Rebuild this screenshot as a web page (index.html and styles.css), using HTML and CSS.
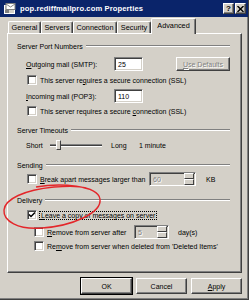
FILE: index.html
```html
<!DOCTYPE html>
<html lang="en">
<head>
<meta charset="UTF-8">
<title>pop.rediffmailpro.com Properties</title>
<link rel="stylesheet" href="styles.css">
</head>
<body>
  <div class="window">
    <div class="titlebar">
      <svg class="app-icon" width="12" height="11" viewBox="0 0 12 11">
        <rect x="0.5" y="2.5" width="10" height="8" fill="#d4d0c8" stroke="#fff"/>
        <rect x="2" y="0.5" width="9" height="6" fill="#fff" stroke="#808080"/>
        <path d="M2 1 L6.5 4 L11 1" stroke="#808080" fill="none"/>
        <rect x="1" y="7" width="4" height="3" fill="#808080"/>
      </svg>
      <span class="title">pop.rediffmailpro.com Properties</span>
      <div class="caption-btns">
        <div class="cap-btn">?</div>
        <div class="cap-btn">
          <svg width="7" height="6" viewBox="0 0 7 6"><path d="M0.5 0 L6.5 6 M6.5 0 L0.5 6" stroke="#000" stroke-width="1.4"/></svg>
        </div>
      </div>
    </div>

    <div class="tabs">
      <div class="tab w-general">General</div>
      <div class="tab w-servers">Servers</div>
      <div class="tab w-conn">Connection</div>
      <div class="tab w-sec">Security</div>
      <div class="tab tab-active w-adv">Advanced</div>
    </div>

    <div class="panel">
      <div class="legend">Server Port Numbers</div>
      <div class="field mt6">
        <span class="field-label"><u>O</u>utgoing mail (SMTP):</span>
        <div class="textbox">25</div>
        <div class="btn btn-disabled defaults"><u>U</u>se Defaults</div>
      </div>
      <div class="check-row mt3">
        <span class="check"></span>
        <span>This server re<u>q</u>uires a secure connection (SSL)</span>
      </div>
      <div class="field mt3">
        <span class="field-label"><u>I</u>ncoming mail (POP3):</span>
        <div class="textbox">110</div>
      </div>
      <div class="check-row mt2">
        <span class="check"></span>
        <span>This server requires a secure <u>c</u>onnection (SSL)</span>
      </div>

      <div class="legend mt8">Server Timeouts</div>
      <div class="slider-row mt4">
        <span class="short">Short</span>
        <div class="slider">
          <div class="track"></div>
          <div class="thumb"></div>
        </div>
        <span class="long">Long</span>
        <span>1 minute</span>
      </div>

      <div class="legend mt9">Sending</div>
      <div class="check-row tall mt2">
        <span class="check"></span>
        <span class="lbl-break"><u>B</u>reak apart messages larger than</span>
        <div class="spin spin-kb">
          <span class="spin-value">60</span>
          <div class="spin-btns"><span></span><span></span></div>
        </div>
        <span class="unit-kb">KB</span>
      </div>

      <div class="legend mt9">Delivery</div>
      <div class="check-row mt4">
        <span class="check">
          <svg width="8" height="8" viewBox="0 0 8 8"><path d="M1 3.5 L3 5.5 L7 1.5" stroke="#000" stroke-width="1.5" fill="none"/></svg>
        </span>
        <span class="focus"><u>L</u>eave a copy of messages on server</span>
      </div>
      <div class="check-row tall sub mt4">
        <span class="check"></span>
        <span class="lbl-remove"><u>R</u>emove from server after</span>
        <div class="spin spin-days">
          <span class="spin-value">5</span>
          <div class="spin-btns"><span></span><span></span></div>
        </div>
        <span class="unit-days">day(s)</span>
      </div>
      <div class="check-row sub mt1">
        <span class="check"></span>
        <span>Re<u>m</u>ove from server when deleted from 'Deleted Items'</span>
      </div>
    </div>

    <div class="buttons">
      <div class="btn btn-default">OK</div>
      <div class="btn">Cancel</div>
      <div class="btn"><u>A</u>pply</div>
    </div>

    <svg class="circle-mark" width="110" height="50" viewBox="0 182 110 50">
      <path d="M36 187 C60 183, 98 185, 100 199 C102 213, 72 226, 42 228 C18 230, 3 221, 4 210 C5 199, 24 190, 54 187 C68 186, 80 186, 86 188" fill="none" stroke="#e4262a" stroke-width="1.4"/>
    </svg>
  </div>
</body>
</html>
```

FILE: styles.css
```css
body {
  margin: 0;
  font-family: "Liberation Sans", Arial, sans-serif;
  font-size: 7px;
  color: #000;
}
.window {
  position: relative;
  width: 249px;
  height: 300px;
  box-sizing: border-box;
  background: #d4d0c8;
  border-right: 1px solid #404040;
  border-bottom: 1px solid #404040;
  box-shadow: inset -1px -1px 0 #808080;
  overflow: hidden;
}
.titlebar {
  display: flex;
  align-items: center;
  height: 17px;
  padding: 0 2px 0 4px;
  background: #0a246a;
  color: #fff;
}
.app-icon {
  margin-right: 4px;
}
.title {
  font-weight: bold;
  font-size: 7.6px;
  letter-spacing: 0.1px;
}
.caption-btns {
  margin-left: auto;
  display: flex;
  gap: 1px;
}
.cap-btn {
  width: 11px;
  height: 11px;
  box-sizing: border-box;
  display: flex;
  align-items: center;
  justify-content: center;
  background: #d4d0c8;
  color: #000;
  font-weight: bold;
  font-size: 8px;
  border-top: 1px solid #fff;
  border-left: 1px solid #fff;
  border-right: 1px solid #404040;
  border-bottom: 1px solid #404040;
  box-shadow: inset -1px -1px 0 #808080;
}

/* tab strip */
.tabs {
  display: flex;
  align-items: flex-end;
  height: 16px;
  padding-left: 8px;
  font-size: 7.3px;
}
.tab {
  height: 12px;
  box-sizing: border-box;
  display: flex;
  align-items: center;
  justify-content: center;
  border-top: 1px solid #fff;
  border-left: 1px solid #fff;
  border-right: 1px solid #404040;
  border-radius: 2px 2px 0 0;
  box-shadow: inset -1px 0 0 #808080;
}
.tab-active {
  height: 16px;
  margin-bottom: -1px;
  position: relative;
  background: #d4d0c8;
  padding-bottom: 2px;
}
.w-general { width: 33px; }
.w-servers { width: 32px; }
.w-conn { width: 44px; }
.w-sec { width: 34px; }
.w-adv { width: 45px; }

/* page */
.panel {
  margin-left: 7px;
  width: 235px;
  height: 240px;
  box-sizing: border-box;
  padding: 7px 11px 0 9px;
  border-top: 1px solid #fff;
  border-left: 1px solid #fff;
  border-right: 1px solid #404040;
  border-bottom: 1px solid #404040;
  box-shadow: inset -1px -1px 0 #808080;
  display: flex;
  flex-direction: column;
}
.legend {
  display: flex;
  align-items: center;
  height: 10px;
  gap: 3px;
}
.legend::after {
  content: "";
  flex: 1;
  border-top: 1px solid #808080;
  border-bottom: 1px solid #fff;
}
.mt1 { margin-top: 1px; }
.mt2 { margin-top: 2px; }
.mt3 { margin-top: 3px; }
.mt4 { margin-top: 4px; }
.mt6 { margin-top: 6px; }
.mt8 { margin-top: 8px; }
.mt9 { margin-top: 9px; }

.field {
  display: flex;
  align-items: center;
  height: 14px;
  padding-left: 9px;
}
.field-label {
  width: 88px;
}
.textbox {
  width: 29px;
  height: 14px;
  box-sizing: border-box;
  padding-left: 3px;
  display: flex;
  align-items: center;
  background: #fff;
  border-top: 1px solid #808080;
  border-left: 1px solid #808080;
  border-right: 1px solid #fff;
  border-bottom: 1px solid #fff;
  box-shadow: inset 1px 1px 0 #404040, inset -1px -1px 0 #d4d0c8;
}
.btn {
  width: 51px;
  height: 16px;
  box-sizing: border-box;
  display: flex;
  align-items: center;
  justify-content: center;
  background: #d4d0c8;
  border-top: 1px solid #fff;
  border-left: 1px solid #fff;
  border-right: 1px solid #404040;
  border-bottom: 1px solid #404040;
  box-shadow: inset -1px -1px 0 #808080;
}
.btn-default {
  outline: 1px solid #000;
}
.btn-disabled {
  color: #808080;
  text-shadow: 1px 1px 0 #fff;
}
.defaults {
  margin-left: auto;
  width: 54px;
  height: 14px;
}

.check-row {
  display: flex;
  align-items: center;
  height: 12px;
  padding-left: 10px;
  gap: 2px;
}
.check-row.tall {
  height: 14px;
}
.check-row.sub {
  padding-left: 17px;
}
.check {
  width: 10px;
  height: 10px;
  box-sizing: border-box;
  display: flex;
  align-items: center;
  justify-content: center;
  background: #fff;
  border-top: 1px solid #808080;
  border-left: 1px solid #808080;
  border-right: 1px solid #fff;
  border-bottom: 1px solid #fff;
  box-shadow: inset 1px 1px 0 #404040, inset -1px -1px 0 #d4d0c8;
  margin-right: 1px;
}
.focus {
  outline: 1px dotted #000;
  padding: 0 1px;
}
.lbl-break { width: 107px; }
.lbl-remove { width: 85px; }

/* slider */
.slider-row {
  display: flex;
  align-items: center;
  height: 12px;
  padding-left: 9px;
}
.short {
  width: 24px;
}
.slider {
  position: relative;
  width: 52px;
  height: 12px;
  display: flex;
  align-items: center;
}
.track {
  width: 100%;
  height: 3px;
  box-sizing: border-box;
  border-top: 1px solid #808080;
  border-bottom: 1px solid #fff;
  background: #404040;
}
.thumb {
  position: absolute;
  left: 6px;
  top: 1px;
  width: 5px;
  height: 10px;
  box-sizing: border-box;
  background: #d4d0c8;
  border-top: 1px solid #fff;
  border-left: 1px solid #fff;
  border-right: 1px solid #404040;
  border-bottom: 1px solid #404040;
}
.long {
  margin-left: 9px;
  width: 28px;
}

/* spin boxes */
.spin {
  height: 14px;
  box-sizing: border-box;
  display: flex;
  align-items: center;
  background: #d4d0c8;
  border-top: 1px solid #808080;
  border-left: 1px solid #808080;
  border-right: 1px solid #fff;
  border-bottom: 1px solid #fff;
  box-shadow: inset 1px 1px 0 #404040, inset -1px -1px 0 #d4d0c8;
}
.spin-kb { width: 47px; }
.spin-days { width: 35px; }
.spin-value {
  color: #808080;
  text-shadow: 1px 1px 0 #fff;
  padding-left: 3px;
  flex: 1;
}
.spin-btns {
  width: 10px;
  height: 12px;
  display: flex;
  flex-direction: column;
  margin-right: 1px;
}
.spin-btns span {
  flex: 1;
  box-sizing: border-box;
  border-top: 1px solid #fff;
  border-left: 1px solid #fff;
  border-right: 1px solid #404040;
  border-bottom: 1px solid #404040;
  background: #d4d0c8;
}
.unit-kb { margin-left: 8px; }
.unit-days { margin-left: 7px; }

.buttons {
  display: flex;
  justify-content: flex-end;
  gap: 4px;
  margin-top: 5px;
  padding-right: 6px;
}

.circle-mark {
  position: absolute;
  left: 0;
  top: 182px;
  pointer-events: none;
}
```
